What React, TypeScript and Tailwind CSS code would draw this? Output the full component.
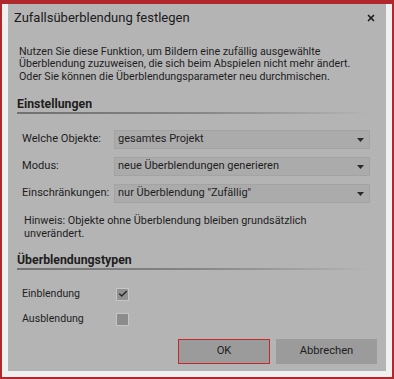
import { Check, X } from "lucide-react";

const font = { fontFamily: 'Roboto, "Noto Sans", sans-serif' };

function Select({ value }: { value: string }) {
  return (
    <div className="flex h-[19px] w-[256px] items-center justify-between border border-[#a3a3a3] bg-[#ababab] pl-[3px] pr-[5px] text-[11px] text-[#1e1e1e]">
      <span className="whitespace-nowrap">{value}</span>
      <svg width="7" height="4" viewBox="0 0 7 4">
        <path d="M0 0h7L3.5 4z" fill="#2a2a2a" />
      </svg>
    </div>
  );
}

function SectionHeader({ title }: { title: string }) {
  return (
    <div className="ml-[9px] mr-[16px]">
      <div className="h-[14px] text-[12.3px] font-bold leading-[14px] text-[#1e1e1e]">{title}</div>
      <div className="mt-[1px] h-[2px] bg-gradient-to-r from-[#707070] via-[#858585] to-[#b4b4b4]" />
    </div>
  );
}

export default function App() {
  const rows = [
    { label: "Welche Objekte:", value: "gesamtes Projekt" },
    { label: "Modus:", value: "neue Überblendungen generieren" },
    { label: "Einschränkungen:", value: 'nur Überblendung "Zufällig"' },
  ];

  return (
    <div className="h-[379px] w-[394px] border-x-2 border-t-4 border-b-[2px] border-[#b0282c] bg-[#f0f0f0]" style={font}>
      <div className="mx-[6px] flex h-[367px] flex-col bg-[#b4b4b4]">
        {/* Title bar */}
        <div className="flex h-[28px] shrink-0 items-center justify-between pl-[6px] pr-[10px]">
          <span className="whitespace-nowrap text-[13px] text-[#1a1a1a]">Zufallsüberblendung festlegen</span>
          <X className="h-[10px] w-[10px] text-[#1a1a1a]" strokeWidth={4} />
        </div>

        <p className="mt-[14px] whitespace-nowrap px-[11px] text-[10.7px] leading-[12.4px] text-[#1e1e1e]">
          Nutzen Sie diese Funktion, um Bildern eine zufällig ausgewählte
          <br />
          Überblendung zuzuweisen, die sich beim Abspielen nicht mehr ändert.
          <br />
          Oder Sie können die Überblendungsparameter neu durchmischen.
        </p>

        <div className="mt-[14px]">
          <SectionHeader title="Einstellungen" />
        </div>

        <div className="mt-[16px] flex flex-col gap-[8px] pl-[14px]">
          {rows.map((r) => (
            <div key={r.label} className="flex h-[19px] items-center">
              <span className="w-[92px] whitespace-nowrap text-[11.1px] text-[#1e1e1e]">{r.label}</span>
              <Select value={r.value} />
            </div>
          ))}
        </div>

        <p className="mt-[11px] whitespace-nowrap pl-[16px] text-[10.85px] leading-[13px] text-[#1e1e1e]">
          Hinweis: Objekte ohne Überblendung bleiben grundsätzlich
          <br />
          unverändert.
        </p>

        <div className="mt-[13px]">
          <SectionHeader title="Überblendungstypen" />
        </div>

        <div className="mt-[17px] flex flex-col gap-[11px] pl-[14px]">
          <div className="flex h-[14px] items-center">
            <span className="w-[94px] text-[10.6px] text-[#1e1e1e]">Einblendung</span>
            <div className="flex h-[13px] w-[13px] items-center justify-center border border-[#c6c6c6] bg-[#929292]">
              <Check className="h-[10px] w-[10px] text-[#2a2a2a]" strokeWidth={3.5} />
            </div>
          </div>
          <div className="flex h-[14px] items-center">
            <span className="w-[94px] text-[10.6px] text-[#1e1e1e]">Ausblendung</span>
            <div className="h-[13px] w-[13px] border border-[#c6c6c6] bg-[#8c8c8c]" />
          </div>
        </div>

        <div className="mt-auto mb-[7px] flex justify-end gap-[6px] pr-[9px]">
          <button className="h-[25px] w-[92px] border border-[#c8262c] bg-[#9b9b9b] text-[11.2px] text-[#1e1e1e]">OK</button>
          <button className="h-[25px] w-[101px] bg-[#9b9b9b] text-[11.2px] text-[#1e1e1e]">Abbrechen</button>
        </div>
      </div>
    </div>
  );
}
